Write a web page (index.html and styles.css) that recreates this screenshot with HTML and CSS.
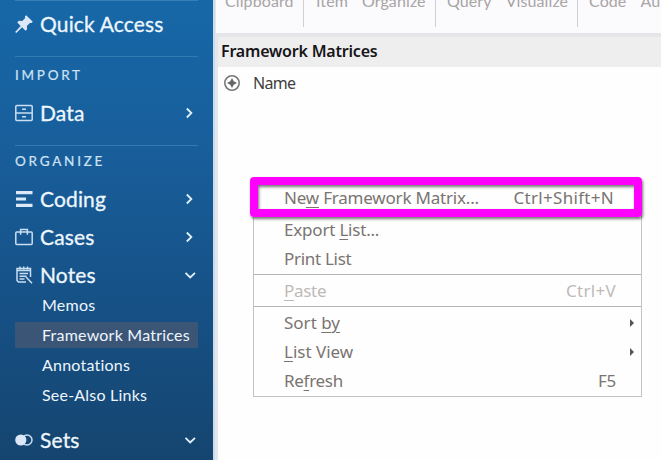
FILE: index.html
```html
<!DOCTYPE html>
<html lang="en">
<head>
<meta charset="utf-8">
<title>Framework Matrices</title>
<link rel="stylesheet" href="styles.css">
</head>
<body>
<div class="app">
  <nav class="sidebar">
    <div class="row quick">
      <svg class="icon" viewBox="0 0 18 18"><path fill="#dce8f8" d="M11.2 0.200 17.800 6.800 16.400 8.100 14.900 7.900 11.900 10.900 12.100 14.200 10.500 15.700 7.100 12.300 1.300 18 0.100 16.900 5.700 10.900 2.300 7.500 3.800 5.800 7.200 6.100 10.200 3.100 9.900 1.600Z"/></svg>
      <span class="label">Quick Access</span>
    </div>
    <h2 class="heading import">IMPORT</h2>
    <div class="row">
      <svg class="icon line" viewBox="0 0 18 18"><rect x="0.8" y="1.6" width="16.4" height="14.8" rx="1"/><path d="M1 9h16M7 5.3h4M7 12.8h4"/></svg>
      <span class="label">Data</span>
      <svg class="chev" viewBox="0 0 12 12"><path d="M3.8 1.5 8.4 6 3.8 10.5"/></svg>
    </div>
    <h2 class="heading organize">ORGANIZE</h2>
    <div class="row">
      <svg class="icon" viewBox="0 0 18 18"><path fill="#dce8f8" d="M1 1h16.500v3.200H1zM1 7.400h10v3.200H1zM1 13.800h16.500v3.200H1z"/></svg>
      <span class="label">Coding</span>
      <svg class="chev" viewBox="0 0 12 12"><path d="M3.800 1.500 8.400 6 3.800 10.500"/></svg>
    </div>
    <div class="row">
      <svg class="icon line" viewBox="0 0 18 18"><rect x="0.800" y="4" width="16.400" height="12.400" rx="1"/><path d="M5.600 6.800V1.400h6.800v5.400"/></svg>
      <span class="label">Cases</span>
      <svg class="chev" viewBox="0 0 12 12"><path d="M3.800 1.500 8.400 6 3.800 10.500"/></svg>
    </div>
    <div class="row">
      <svg class="icon line notes" viewBox="0 0 18 18"><path d="M11 16H3.500L2 14.500V2.500h13.500V11M2 4.400h13.500M5 .5v3M8.700 .5v3M12.500 .5v3M4.500 7.500h8.500M4.500 10.200h7M4.500 12.900h5M11 11l6 6.300"/></svg>
      <span class="label">Notes</span>
      <svg class="chev down" viewBox="0 0 12 12"><path d="M1.500 3.800 6.200 8.400 11 3.800"/></svg>
    </div>
    <ul class="sub">
      <li>Memos</li>
      <li class="active">Framework Matrices</li>
      <li>Annotations</li>
      <li>See-Also Links</li>
    </ul>
    <div class="row">
      <svg class="icon line" viewBox="0 0 18 18"><circle cx="12" cy="9" r="5"/><circle cx="5.800" cy="9" r="5.600" fill="#dce8f8" stroke="none"/></svg>
      <span class="label">Sets</span>
      <svg class="chev down" viewBox="0 0 12 12"><path d="M1.500 3.800 6.200 8.400 11 3.800"/></svg>
    </div>
  </nav>
  <main class="main">
    <div class="ribbon">
      <div class="group clip"><span>Clipboard</span></div>
      <div class="group item"><span>Item</span><span>Organize</span></div>
      <div class="group query"><span>Query</span><span>Visualize</span></div>
      <div class="group code"><span>Code</span><span>Au</span></div>
    </div>
    <section class="panel">
      <h1 class="title">Framework Matrices</h1>
      <div class="columns">
        <svg class="plus" viewBox="0 0 16 16"><circle cx="8" cy="8" r="7.200"/><path d="M8 3 9.700 6.300 13 8 9.700 9.700 8 13 6.300 9.700 3 8 6.300 6.300Z"/></svg>
        <span class="name">Name</span>
      </div>
    </section>
  </main>
</div>
<div class="menu">
  <div class="mi first"><span class="new">Ne<u>w</u> Framework Matrix...</span><span class="key">Ctrl+Shift+N</span></div>
  <div class="mi"><span class="new">Export <u>L</u>ist...</span></div>
  <div class="mi"><span>Print List</span></div>
  <div class="mi paste"><span><u>P</u>aste</span><span class="key">Ctrl+V</span></div>
  <div class="mi"><span class="sort">Sort <u>by</u></span><i class="arrow"></i></div>
  <div class="mi"><span class="view"><u>L</u>ist View</span><i class="arrow"></i></div>
  <div class="mi"><span>Re<u>f</u>resh</span><span>F5</span></div>
</div>
<div class="marker"></div>
</body>
</html>
```
FILE: styles.css
```css
* { box-sizing: border-box; }
body { margin: 0; width: 661px; height: 460px; overflow: hidden; font-family: "Noto Sans", sans-serif; background: #fefefe; }
.app { display: flex; height: 460px; }

.sidebar { width: 213px; flex: none; height: 460px; padding: 0 15px; background: linear-gradient(#1767a7, #185e9b 33%, #164f83 70%, #15456f); color: #edf6fd; font-family: Lato, sans-serif; overflow: hidden; }
.row { display: flex; align-items: center; height: 38px; }
.quick { height: 47px; border-top: 1px solid #367fb7; }
.icon { width: 18px; height: 18px; flex: none; margin-right: 7px; }
.line { fill: none; stroke: #c9def2; stroke-width: 1.500; }
.notes { stroke-width: 1.500; }
.label { flex: 1; font-size: 21px; line-height: 30px; font-weight: 400; letter-spacing: .15px; white-space: nowrap; -webkit-text-stroke: .3px #edf6fd; }
.chev { width: 12px; height: 12px; margin-right: 3px; fill: none; stroke: #e2f0fb; stroke-width: 1.800; }
.down { margin-right: 2px; }
.heading { margin: 9px 0 0; border-top: 1px solid #337ab0; font-size: 13.500px; font-weight: 400; letter-spacing: 2.750px; color: #cfe3f4; -webkit-text-stroke: .2px #cfe3f4; }
.import { height: 38px; line-height: 36px; }
.organize { margin-top: 13px; height: 35px; line-height: 30px; }
.sub { list-style: none; margin: -4px 0 11px; padding: 0; font-size: 16px; line-height: 30px; letter-spacing: .22px; }
.sub li { height: 30px; padding-left: 27px; white-space: nowrap; }
.sub .active { height: 26px; line-height: 26px; margin: 2px 0; background: #3b5577; }

.main { flex: 1; min-width: 0; border-left: 2px solid #c5def0; background: #e6e6ea; padding-left: 1px; }
.ribbon { display: flex; height: 33px; background: #fbfafd; color: #a8a5a5; font: 16px/20px Lato, sans-serif; overflow: hidden; }
.group { display: flex; gap: 14px; flex: none; height: 27px; border-right: 1px solid #d0cfd3; padding-left: 12px; white-space: nowrap; }
.group span { margin-top: -9px; height: 20px; letter-spacing: .1px; }
.clip { width: 88px; padding-left: 9px; }
.item { width: 132px; }
.query { width: 142px; padding-left: 11px; }
.code { width: 84px; padding-left: 11px; border: 0; }
.panel { margin: 4px 0 0 2px; height: 423px; background: #fefefe; }
.title { margin: 0; height: 30px; padding-left: 3px; background: #efeeef; font-size: 16px; line-height: 28px; font-weight: 600; letter-spacing: -.2px; color: #161518; }
.columns { display: flex; align-items: center; height: 32px; padding-left: 6px; color: #403e40; font-size: 16px; }
.name { letter-spacing: -.7px; }
.plus { width: 16px; height: 16px; margin-right: 13px; fill: #666; }
.plus circle { fill: none; stroke: #777; stroke-width: 1.600; }

.menu { position: absolute; left: 253px; top: 181px; width: 389px; height: 216px; border: 1px solid #c3c2c6; background: #fefefe; color: #7a7471; font-size: 17px; letter-spacing: -.3px; }
.mi { display: flex; align-items: center; justify-content: space-between; height: 29px; padding: 0 25px 0 30px; white-space: nowrap; }
.first { height: 33px; padding: 0 27px 2px 30px; }
.mi u { text-underline-offset: 3px; text-decoration-thickness: 1px; }
.new { letter-spacing: -.2px; }
.key { letter-spacing: .3px; }
.sort, .view { letter-spacing: 0; }
.paste { height: 33px; margin: 1px 0; border: solid #b5b5b8; border-width: 1px 0; color: #bfbab8; }
.arrow { margin-right: -18px; border: solid transparent; border-width: 4px 0 4px 4px; border-left-color: #555; }
.marker { position: absolute; left: 250px; top: 177px; width: 392px; height: 40px; border: 8px solid #f0f; border-radius: 4px; box-shadow: 1px 2px 3px #0008, inset 1px 2px 3px #0008; }
```
